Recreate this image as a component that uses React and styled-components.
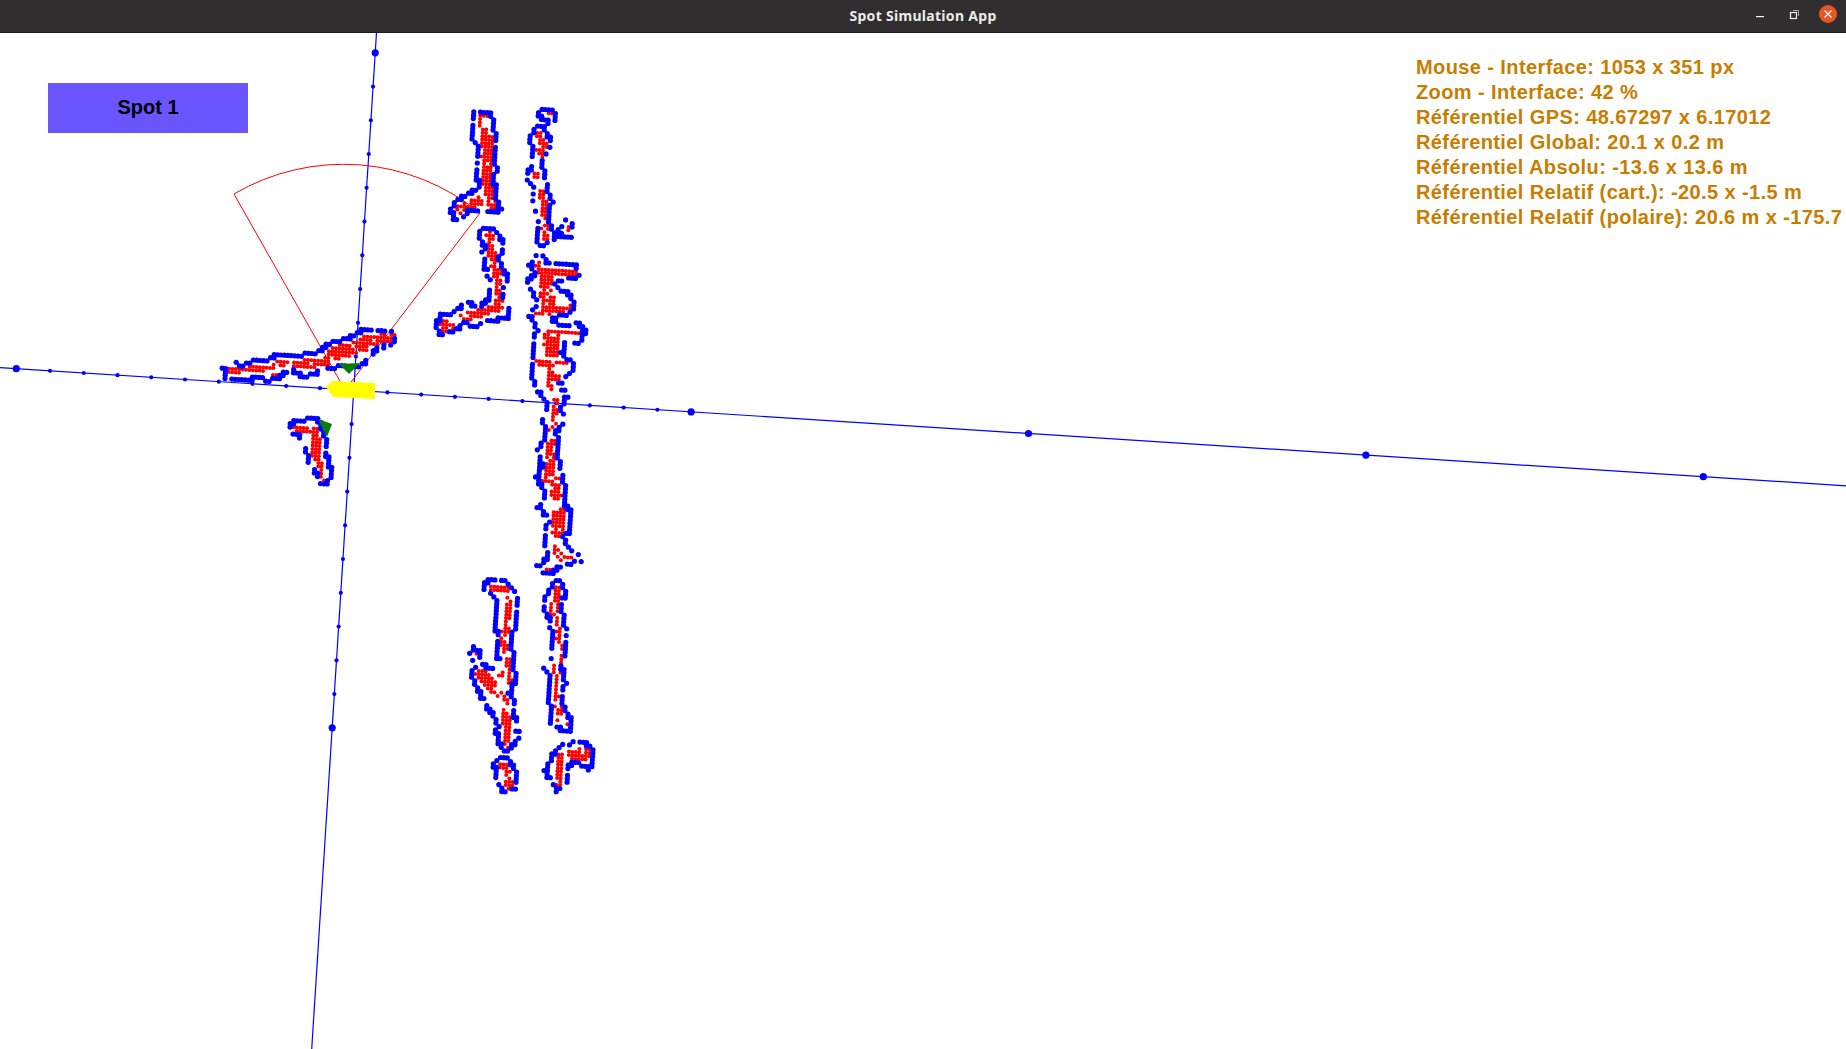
import React, { useMemo } from "react";
import styled, { createGlobalStyle } from "styled-components";

const GlobalStyle = createGlobalStyle`
  html, body {
    margin: 0;
    padding: 0;
    background: #ffffff;
  }
`;

// Map frame, in window pixels
const ORIGIN = { x: 353.7, y: 390.3 };
const UNIT_X = { x: 337.4, y: 21.6 };
const UNIT_Y = { x: -21.5, y: 337.5 };
const CELL = 3.4;

const INFO_LINES = [
  "Mouse - Interface: 1053 x 351 px",
  "Zoom - Interface: 42 %",
  "Référentiel GPS: 48.67297 x 6.17012",
  "Référentiel Global: 20.1 x 0.2 m",
  "Référentiel Absolu: -13.6 x 13.6 m",
  "Référentiel Relatif (cart.): -20.5 x -1.5 m",
  "Référentiel Relatif (polaire): 20.6 m x -175.7",
];

// Obstacles: outline + red strokes [points, half width], in full window px
const OBSTACLES = [
  // top L
  {
    at: [420, 90],
    outline: [[155, 90], [160, 68], [185, 62], [205, 68], [222, 95], [222, 125], [232, 130], [225, 160], [230, 180], [222, 215], [230, 235], [222, 265], [222, 285], [232, 295], [228, 330], [240, 355], [225, 370], [205, 365], [180, 365], [150, 362], [130, 382], [105, 385], [92, 360], [105, 335], [130, 320], [150, 312], [175, 295], [175, 275], [165, 265], [168, 230], [178, 190], [175, 165], [160, 155], [155, 125]],
    red: [
      [[[180, 75], [180, 110]], 2.4],
      [[[198, 76], [198, 78]], 2.4],
      [[[200, 130], [203, 180]], 5],
      [[[200, 195], [200, 270]], 5],
      [[[205, 280], [208, 325], [220, 355]], 4],
      [[[175, 335], [125, 355]], 4.5],
    ],
  },
  // small cap
  {
    at: [420, 90],
    outline: [[355, 72], [375, 55], [395, 55], [408, 72], [400, 95], [380, 95], [362, 88]],
    red: [[[[385, 68], [405, 70]], 2.4]],
  },
  // thin column
  {
    at: [420, 90],
    outline: [[330, 140], [350, 110], [370, 112], [392, 150], [385, 175], [370, 210], [370, 260], [380, 290], [395, 335], [385, 370], [392, 410], [405, 430], [425, 410], [440, 392], [455, 410], [452, 445], [430, 440], [415, 430], [395, 455], [370, 467], [355, 460], [350, 420], [352, 385], [340, 340], [338, 290], [320, 270], [315, 255], [330, 235], [340, 200], [335, 180]],
    red: [
      [[[355, 135], [375, 170]], 3],
      [[[350, 180], [365, 182], [365, 225]], 2.4],
      [[[345, 256], [347, 256]], 3],
      [[[367, 310], [375, 385]], 3],
      [[[375, 412], [378, 445]], 3.5],
      [[[444, 418], [444, 420]], 2.4],
    ],
  },
  // lower L
  {
    at: [420, 90],
    outline: [[175, 430], [190, 412], [215, 412], [235, 430], [245, 450], [250, 475], [235, 510], [245, 530], [260, 555], [255, 590], [250, 625], [265, 650], [260, 680], [230, 690], [190, 695], [170, 710], [130, 700], [105, 720], [75, 735], [50, 725], [50, 700], [60, 680], [75, 672], [95, 670], [125, 650], [150, 635], [170, 655], [200, 635], [212, 600], [210, 570], [190, 525], [190, 490], [192, 470]],
    red: [
      [[[210, 435], [218, 520]], 3.5],
      [[[235, 545], [235, 650]], 4],
      [[[235, 655], [130, 682]], 3.8],
      [[[62, 708], [100, 708]], 2.4],
      [[[74, 690], [74, 722]], 2.4],
    ],
  },
  // long central wall, top half
  {
    at: [0, 0],
    outline: [[530, 265], [537, 256], [542, 256], [548, 263], [558, 263], [573, 263], [580, 272], [577, 278], [560, 280], [555, 283], [557, 290], [567, 293], [572, 298], [573, 310], [567, 313], [555, 318], [552, 322], [563, 325], [577, 323], [585, 330], [582, 338], [577, 345], [565, 343], [562, 353], [572, 363], [573, 370], [560, 383], [567, 398], [560, 408], [564, 420], [557, 432], [557, 453], [560, 465], [563, 475], [564, 485], [566, 497], [563, 505], [571, 512], [571, 530], [562, 537], [568, 548], [578, 553], [580, 562], [572, 563], [562, 563], [553, 572], [543, 573], [538, 567], [548, 557], [545, 543], [545, 530], [550, 520], [538, 508], [543, 497], [545, 492], [537, 478], [542, 465], [538, 453], [540, 443], [545, 437], [543, 417], [547, 402], [538, 392], [532, 377], [532, 362], [533, 353], [532, 347], [537, 328], [530, 315], [538, 303], [532, 290], [527, 282], [535, 273]],
    red: [
      [[[540, 270], [575, 272]], 3],
      [[[538, 263], [538, 268]], 2.4],
      [[[546, 280], [548, 308]], 6],
      [[[537, 314], [570, 308]], 2.4],
      [[[555, 332], [577, 333]], 2.5],
      [[[552, 338], [553, 350]], 7.5],
      [[[537, 363], [567, 363]], 2.4],
      [[[552, 363], [550, 387]], 2.4],
      [[[555, 378], [557, 378]], 2.5],
      [[[556, 400], [558, 402]], 2.5],
      [[[555, 408], [555, 420]], 3.5],
      [[[552, 429], [552, 429]], 3],
      [[[554, 442], [549, 447]], 3],
      [[[550, 455], [550, 473]], 5],
      [[[545, 480], [556, 478]], 3],
      [[[556, 488], [556, 496]], 5],
      [[[559, 512], [559, 533]], 5.5],
      [[[555, 548], [563, 560]], 3],
      [[[570, 557], [572, 557]], 2.4],
      [[[547, 570], [551, 570]], 2.4],
      [[[551, 533], [551, 533]], 2.4],
    ],
  },
  // lower left hook
  {
    at: [450, 570],
    outline: [[100, 50], [120, 28], [165, 32], [190, 60], [205, 95], [195, 130], [200, 160], [180, 205], [195, 265], [190, 295], [200, 320], [190, 345], [178, 370], [195, 395], [190, 420], [200, 470], [205, 505], [180, 535], [165, 545], [145, 520], [140, 485], [145, 465], [125, 430], [100, 395], [85, 360], [65, 320], [75, 290], [55, 250], [75, 235], [95, 245], [90, 270], [120, 298], [145, 270], [140, 205], [140, 160], [145, 100], [125, 70]],
    red: [
      [[[120, 55], [170, 60]], 2.5],
      [[[175, 85], [175, 180]], 3],
      [[[163, 190], [163, 240]], 3],
      [[[175, 265], [180, 340]], 2.4],
      [[[92, 312], [125, 350]], 5],
      [[[130, 360], [175, 395]], 2.5],
      [[[165, 425], [172, 470]], 4],
      [[[175, 480], [172, 530]], 2.5],
      [[[78, 251], [80, 251]], 2.4],
      [[[150, 305], [150, 315]], 2.4],
    ],
  },
  // lower thin wall
  {
    at: [450, 570],
    outline: [[278, 100], [305, 45], [320, 28], [340, 45], [345, 75], [330, 110], [345, 160], [350, 230], [335, 290], [345, 340], [335, 400], [365, 450], [362, 475], [345, 485], [305, 460], [300, 400], [300, 320], [285, 290], [310, 260], [305, 190], [300, 145], [282, 130]],
    red: [
      [[[320, 50], [320, 120]], 2.2],
      [[[305, 105], [305, 135]], 2.2],
      [[[320, 150], [325, 210]], 2.5],
      [[[335, 230], [335, 310]], 2.2],
      [[[320, 320], [320, 385]], 2.2],
      [[[325, 410], [330, 430]], 3.2],
      [[[320, 456], [322, 456]], 2.2],
      [[[353, 465], [355, 465]], 2.2],
      [[[312, 285], [310, 300]], 2.2],
    ],
  },
  // bottom right hook
  {
    at: [450, 570],
    outline: [[285, 605], [305, 560], [320, 540], [345, 520], [405, 518], [430, 540], [425, 585], [410, 597], [380, 575], [350, 590], [345, 650], [320, 662], [300, 630]],
    red: [
      [[[330, 560], [325, 640]], 3.2],
      [[[345, 545], [375, 555]], 2.4],
      [[[385, 560], [408, 550]], 6],
    ],
  },
  // bottom small
  {
    at: [450, 570],
    outline: [[125, 585], [150, 562], [175, 565], [198, 605], [198, 650], [175, 665], [155, 660], [145, 630], [135, 595]],
    red: [
      [[[150, 587], [180, 590]], 2.4],
      [[[170, 595], [178, 650]], 3.4],
    ],
  },
  // wall in front of the robot
  {
    at: [200, 310],
    outline: [[70, 180], [90, 158], [130, 165], [160, 155], [200, 155], [235, 130], [260, 140], [300, 135], [350, 130], [390, 100], [460, 80], [490, 60], [575, 60], [585, 100], [530, 115], [480, 170], [430, 165], [360, 185], [310, 200], [270, 175], [240, 200], [210, 212], [170, 205], [110, 210], [80, 205]],
    red: [
      [[[90, 182], [220, 172]], 2.4],
      [[[235, 155], [255, 158]], 3],
      [[[290, 165], [375, 155]], 4],
      [[[400, 130], [490, 105]], 6],
      [[[500, 90], [575, 85]], 4.5],
      [[[218, 200], [235, 200]], 2.2],
    ],
  },
  // short wall behind the robot
  {
    at: [200, 310],
    outline: [[270, 348], [290, 328], [355, 330], [375, 380], [380, 430], [390, 470], [395, 490], [380, 525], [360, 515], [340, 475], [325, 455], [320, 410], [300, 380], [285, 375]],
    red: [
      [[[290, 355], [350, 360]], 3],
      [[[345, 370], [350, 440]], 4],
      [[[360, 460], [372, 505]], 2.4],
    ],
  },
];

const noise = (i, j) => {
  const v = Math.sin(i * 12.9898 + j * 78.233) * 43758.5453;
  return v - Math.floor(v);
};

// grid follows the map axes, so the dots step the same way as in the scan
const toCell = (p) => {
  const dx = p[0] - ORIGIN.x;
  const dy = p[1] - ORIGIN.y;
  return [
    Math.round((dx * 0.998 + dy * 0.064) / CELL),
    Math.round((-dx * 0.064 + dy * 0.998) / CELL),
  ];
};

const fromCell = ([i, j]) => [
  ORIGIN.x + (i * 0.998 - j * 0.064) * CELL,
  ORIGIN.y + (i * 0.064 + j * 0.998) * CELL,
];

const distToSegment = (p, a, b) => {
  const abx = b[0] - a[0];
  const aby = b[1] - a[1];
  const len = abx * abx + aby * aby;
  const t = len ? Math.max(0, Math.min(1, ((p[0] - a[0]) * abx + (p[1] - a[1]) * aby) / len)) : 0;
  return Math.hypot(p[0] - a[0] - abx * t, p[1] - a[1] - aby * t);
};

const buildObstacle = ({ at, outline, red }) => {
  const map = (z) => [at[0] === 0 ? z[0] : at[0] + z[0] / 3, at[1] === 0 ? z[1] : at[1] + z[1] / 3];

  const blue = [];
  const seen = new Set();
  const ring = outline.map(map);
  ring.forEach((a, n) => {
    const b = ring[(n + 1) % ring.length];
    const steps = Math.ceil(Math.hypot(b[0] - a[0], b[1] - a[1]) / 2.2);
    for (let s = 0; s < steps; s++) {
      const cell = toCell([a[0] + ((b[0] - a[0]) * s) / steps, a[1] + ((b[1] - a[1]) * s) / steps]);
      const key = cell.join();
      if (seen.has(key)) continue;
      seen.add(key);
      if (noise(cell[0], cell[1]) > 0.15) blue.push(fromCell(cell));
    }
  });

  const dots = new Map();
  red.forEach(([line, halfWidth]) => {
    const pts = line.map(map);
    const xs = pts.map((p) => p[0]);
    const ys = pts.map((p) => p[1]);
    const reach = halfWidth * 1.15;
    const pad = reach + CELL;
    for (let x = Math.min(...xs) - pad; x <= Math.max(...xs) + pad; x += CELL / 2) {
      for (let y = Math.min(...ys) - pad; y <= Math.max(...ys) + pad; y += CELL / 2) {
        const cell = toCell([x, y]);
        const c = fromCell(cell);
        const near = pts.some((a, n) => distToSegment(c, a, pts[Math.min(n + 1, pts.length - 1)]) <= reach);
        if (near && noise(cell[1] + 7, cell[0] - 3) > 0.12) dots.set(cell.join(), c);
      }
    }
  });

  return { blue, red: [...dots.values()] };
};

const axisPoint = (unit, t) => [ORIGIN.x + unit.x * t, ORIGIN.y + unit.y * t];

const axisTicks = (unit, from, to) => {
  const ticks = [];
  for (let t = from; t <= to; t++) {
    const big = t % 10 === 0 && t !== 0;
    if (t >= -10 && t <= 10) ticks.push({ p: axisPoint(unit, t / 10), r: big ? 3.6 : 2.1 });
    else if (big) ticks.push({ p: axisPoint(unit, t / 10), r: 3.6 });
  }
  return ticks;
};

const Window = styled.div`
  display: flex;
  flex-direction: column;
  width: 1846px;
  height: 1049px;
  overflow: hidden;
`;

const TitleBar = styled.header`
  position: relative;
  flex: 0 0 33px;
  box-sizing: border-box;
  display: flex;
  align-items: center;
  justify-content: center;
  padding-bottom: 2px;
  background: #302e2f;
  border-bottom: 1px solid #1c1c1c;
`;

const Title = styled.h1`
  margin: 0;
  font-family: "Noto Sans", "DejaVu Sans", sans-serif;
  font-size: 14px;
  font-weight: 700;
  color: #ecebe9;
  letter-spacing: 0.3px;
`;

const WindowControls = styled.div`
  position: absolute;
  right: 9px;
  top: 5px;
  display: flex;
  align-items: center;
  gap: 16px;
`;

const ControlIcon = styled.svg`
  display: block;
  width: 18px;
  height: 18px;
`;

const Canvas = styled.main`
  position: relative;
  flex: 1;
  box-sizing: border-box;
  display: flex;
  justify-content: space-between;
  align-items: flex-start;
  padding: 50px 0 0 48px;
  background: #ffffff;
`;

const MapLayer = styled.svg`
  position: absolute;
  inset: 0;
  width: 100%;
  height: 100%;
`;

const SpotButton = styled.button`
  position: relative;
  width: 200px;
  height: 50px;
  border: 0;
  padding: 0 0 2px;
  background: #6a55ff;
  color: #000000;
  font-family: "Liberation Sans", Arial, sans-serif;
  font-size: 20px;
  font-weight: 700;
`;

const InfoPanel = styled.div`
  position: relative;
  width: 430px;
  margin-top: -28px;
  font-family: "Liberation Sans", Arial, sans-serif;
  font-size: 20px;
  font-weight: 700;
  line-height: 25px;
  letter-spacing: 0.4px;
  color: #c87d00;
  white-space: nowrap;
`;

const InfoLine = styled.div`
  height: 25px;
`;

const Dots = ({ points, r, fill }) => (
  <g fill={fill}>
    {points.map((p, i) => (
      <circle key={i} cx={p[0].toFixed(1)} cy={p[1].toFixed(1)} r={r} />
    ))}
  </g>
);

const SlamMap = () => {
  const obstacles = useMemo(() => OBSTACLES.map(buildObstacle), []);
  const xTicks = useMemo(() => axisTicks(UNIT_X, -10, 40), []);
  const yTicks = useMemo(() => axisTicks(UNIT_Y, -10, 10), []);

  return (
    <MapLayer viewBox="0 33 1846 1016">
      <g stroke="#0000ff" strokeWidth="1.2">
        <line x1="0" y1="367.6" x2="1846" y2="485.8" />
        <line x1="376.5" y1="33" x2="311.7" y2="1049" />
      </g>
      <g fill="#0000ff">
        {[...xTicks, ...yTicks].map((t, i) => (
          <circle key={i} cx={t.p[0]} cy={t.p[1]} r={t.r} />
        ))}
      </g>
      <path
        d="M345 390 L234 194 A216 216 0 0 1 480 213 Z"
        fill="none"
        stroke="#ff0000"
        strokeWidth="1"
      />
      {obstacles.map((o, i) => (
        <g key={i}>
          <Dots points={o.red} r={2} fill="#ff0000" />
          <Dots points={o.blue} r={2.6} fill="#0000ff" />
        </g>
      ))}
      <polygon points="339,364 360,363 349,374" fill="#087c08" />
      <polygon points="318,419 332,424 327,437" fill="#087c08" />
      <polygon points="326,387 332,381 375,383 375,399 333,397" fill="#ffff00" />
    </MapLayer>
  );
};

export default function App() {
  return (
    <Window>
      <GlobalStyle />
      <TitleBar>
        <Title>Spot Simulation App</Title>
        <WindowControls>
          <ControlIcon viewBox="0 0 18 18">
            <rect x="5" y="11" width="8" height="1.2" fill="#f2f2f2" />
          </ControlIcon>
          <ControlIcon viewBox="0 0 18 18">
            <rect x="5.5" y="7.5" width="6" height="6" fill="none" stroke="#f2f2f2" strokeWidth="1.2" />
            <path d="M8 5.5 H13.5 V11" fill="none" stroke="#a8a8a8" strokeWidth="1" />
          </ControlIcon>
          <ControlIcon viewBox="0 0 18 18">
            <circle cx="9" cy="9" r="9" fill="#e95420" />
            <path d="M5.5 5.5 L12.5 12.5 M12.5 5.5 L5.5 12.5" stroke="#ffffff" strokeWidth="1.3" />
          </ControlIcon>
        </WindowControls>
      </TitleBar>
      <Canvas>
        <SlamMap />
        <SpotButton>Spot 1</SpotButton>
        <InfoPanel>
          {INFO_LINES.map((line) => (
            <InfoLine key={line}>{line}</InfoLine>
          ))}
        </InfoPanel>
      </Canvas>
    </Window>
  );
}
